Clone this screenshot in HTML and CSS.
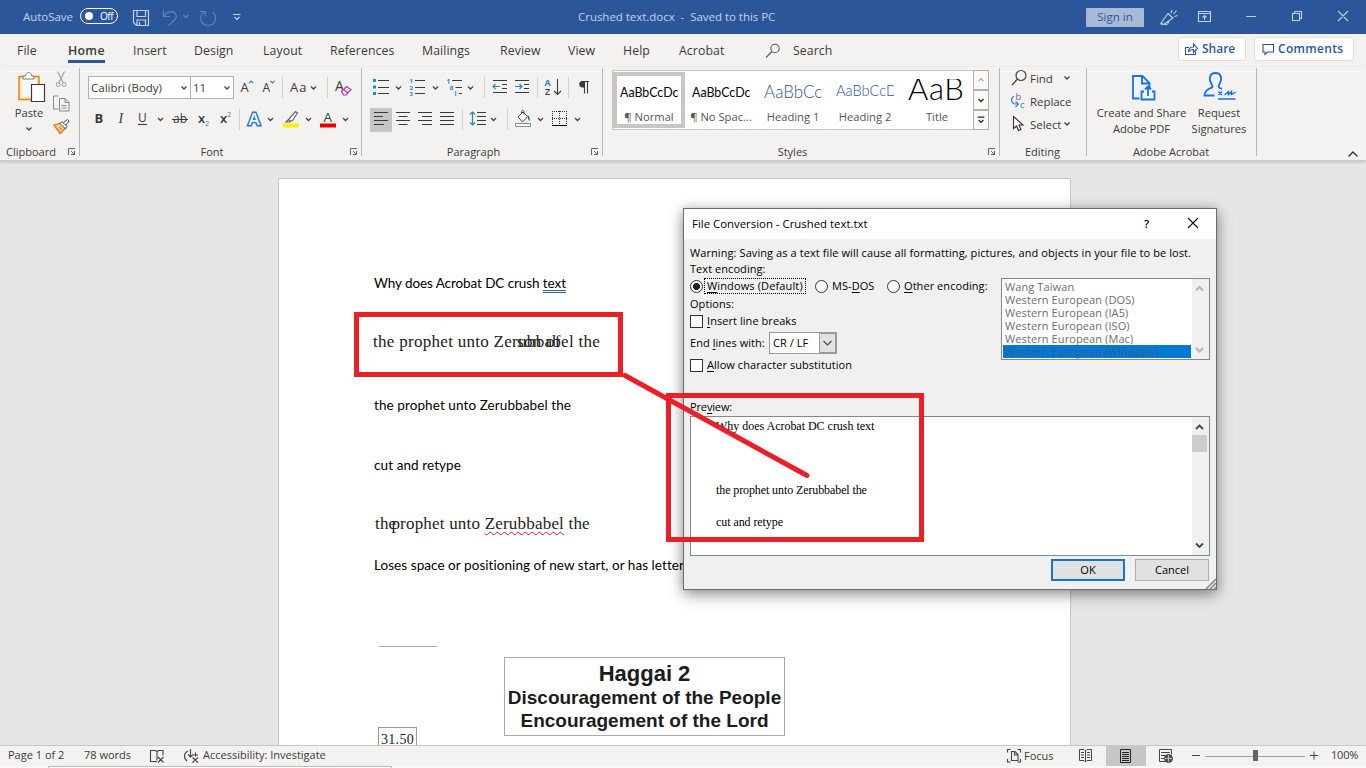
FILE: index.html
```html
<!DOCTYPE html>
<html lang="en">
<head>
<meta charset="utf-8">
<title>Crushed text.docx - Word</title>
<link rel="stylesheet" href="styles.css">
</head>
<body>
<header class="titlebar">
  <div class="quick">
    <span class="autosave">AutoSave</span>
    <span class="toggle"><i class="knob"></i>Off</span>
    <svg width="132" height="34" viewBox="118 0 132 34" fill="none" stroke="#c3d2ea" stroke-width="1.2">
      <path d="M133.5 10.5h15v15h-12l-3-3zM137 10.5v6h8.500v-6M137 25v-5h8.500v5M139.500 25v-3"/>
      <g stroke="#5f82bd"><path d="M163.500 10v6.500h6.500M164 16c3.500-5.500 10-5.500 12-1.500 1.500 3.500-2 6-7.500 11"/><path d="M183.500 15l2.500 2.500 2.500-2.500M200 11.500h5.500v5M204.500 12c-5 3-6 12 3.500 13.500 8-.5 9.500-9 5-13"/></g>
      <path d="M233 14.500h7.500M234.500 17l2.500 2.500 2.500-2.500"/>
    </svg>
  </div>
  <div class="doc-title">Crushed text.docx &nbsp;-&nbsp; Saved to this PC</div>
  <div class="window-tools">
    <button class="signin">Sign in</button>
    <svg width="222" height="34" viewBox="1144 0 222 34" fill="none" stroke="#c3d2ea" stroke-width="1.100">
      <path d="M1168 13.500l5 4.500-9.500 6.500-2.500-1.500zM1164 24c2 1.500 4.500.5 5-3M1160.500 23l1.500 2M1171 13l1-3M1173.500 14l3-3.500M1174.500 16.500l3-1"/>
      <path d="M1198.500 11.500h12v10h-12zM1198.500 13.500h12M1204.500 20v-4.500M1202.500 17.500l2-2 2 2"/>
      <path d="M1246 16.500h10M1292.500 13.500h7v7h-7zM1294.500 13.500v-2h7v7h-2M1338 11l10 10M1348 11l-10 10"/>
    </svg>
  </div>
</header>

<nav class="tabs">
  <div class="tab-list">
    <a>File</a><a class="active">Home</a><a>Insert</a><a>Design</a><a>Layout</a><a>References</a><a>Mailings</a><a>Review</a><a>View</a><a>Help</a><a>Acrobat</a>
    <a class="search"><svg width="16" height="16" viewBox="764 42 16 16" fill="none" stroke="#555" stroke-width="1.100"><circle cx="774" cy="47.500" r="4.200"/><path d="M771 50.500l-6 6"/></svg>Search</a>
  </div>
  <button class="pill share"><svg width="14" height="14" viewBox="1185 42 14 14" fill="none" stroke="#2b579a" stroke-width="1.100"><path d="M1189 47.500h-3.500v7h10v-3M1188.500 52c0-3 2-5 5-5v-3l4 4.500-4 4v-3c-2 0-4 .5-5 2.500z"/></svg>Share</button>
  <button class="pill comments"><svg width="14" height="14" viewBox="1262 42 14 14" fill="none" stroke="#2b579a" stroke-width="1.100"><path d="M1263 44.500h10.500v7.500h-6l-2.500 2.500v-2.500h-2z"/></svg>Comments</button>
</nav>

<section class="ribbon">
  <div class="group clipboard">
    <div class="body">
      <div class="paste">
        <svg width="36" height="38" viewBox="11 68 36 38" fill="none"><path d="M19 76.500h20v23H19z" fill="#fbe0a8" stroke="#e08a1e" stroke-width="1.500"/><path d="M21.500 79h15v18h-15z" fill="#fafafa"/><path d="M23 79v-3h2.500c0-4.500 6-4.500 6 0H34v3z" fill="#fff" stroke="#777"/><path d="M31.500 84.500h13v17h-13z" fill="#fff" stroke="#3b3a39" stroke-width="1.200"/></svg>
        <span>Paste</span>
        <svg width="8" height="6" viewBox="0 0 8 6" class="chev"><path d="M1.500 1.500L4 4l2.500-2.500"/></svg>
      </div>
      <svg width="24" height="72" viewBox="50 68 24 72" fill="none" stroke="#a19f9d"><path d="M57.500 71.500l5.500 11M64.500 71.500l-5.500 11" stroke-width="1.200"/><circle cx="58.200" cy="84.500" r="2"/><circle cx="64" cy="84.500" r="2"/><path d="M58.500 96h-5v13h5M59.500 98.500h5.500l4 4v8.500h-9.500zM65 98.500v4h4M61.500 105.500h5M61.500 108h5" stroke="#8a8886"/><path d="M54 125l7-2 5 5-6 5.500z" fill="#f9c98a" stroke="#e07a10" stroke-width="1.300"/><path d="M57 128.500l2 2M59.500 127l2 3" stroke="#e07a10"/><path d="M60 123.500l2-2 5 5-2 2zM63.500 122.500l4-3 1.500 1.500-3 4" fill="#fff" stroke="#444"/></svg>
    </div>
    <div class="label"><span>Clipboard</span><svg class="launch" width="16" height="12" viewBox="0 0 16 12"><path d="M5.500 9V2.500H12M8 5l3.500 3.500M11.500 5v3.500H8"/></svg></div>
  </div>

  <div class="group font">
    <div class="body stack">
      <div class="row">
        <span class="combo family">Calibri (Body)<svg width="8" height="6" viewBox="0 0 8 6" class="chev"><path d="M1.500 1.500L4 4l2.500-2.500"/></svg></span>
        <span class="combo size">11<svg width="8" height="6" viewBox="0 0 8 6" class="chev"><path d="M1.500 1.500L4 4l2.500-2.500"/></svg></span>
        <svg class="glyphs" width="50" height="24" viewBox="234 76 50 24"><text x="240.500" y="92" font-size="13">A</text><text x="262.500" y="92" font-size="12">A</text><path class="b" d="M249 83l2-2 2 2M270.500 81l2 2 2-2"/><path class="sep" d="M282.500 77v21"/></svg>
        <svg class="glyphs" width="46" height="24" viewBox="284 76 46 24"><text x="290" y="92" font-size="13" letter-spacing="1">Aa</text><path class="c" d="M311 86.500l2.500 2.500 2.500-2.500"/><path class="sep" d="M327.500 77v21"/></svg>
        <svg class="glyphs" width="26" height="24" viewBox="330 76 26 24"><text x="335" y="91" font-size="14">A</text><path d="M341.500 91.500l5-5 4.500 3-5 5.500h-2.500zM343.500 89.500l4.500 3.500" fill="#f5e6fa" stroke="#a33eb5" stroke-width="1.200"/></svg>
      </div>
      <div class="row">
        <svg class="glyphs" width="78" height="24" viewBox="88 108 78 24"><text x="94.500" y="123" font-size="13" font-weight="700">B</text><text x="118.500" y="123" class="serif" font-size="14" font-style="italic">I</text><text x="138" y="122" font-size="12">U</text><path class="k" d="M138 124.500h9"/><path class="c" d="M158 118l2.500 2.500 2.500-2.500"/></svg>
        <svg class="glyphs" width="76" height="24" viewBox="166 108 76 24"><text x="173" y="123" font-size="12">ab</text><path class="k" d="M172 119.500h16"/><text x="198" y="123" font-size="13" font-weight="600">x</text><text x="205" y="126" font-size="7.500" class="blue">2</text><text x="220" y="123" font-size="13" font-weight="600">x</text><text x="227" y="117" font-size="7.500" class="blue">2</text><path class="sep" d="M239.500 109v21"/></svg>
        <svg class="glyphs" width="36" height="24" viewBox="242 108 36 24"><text class="outlined" x="248.500" y="125" font-size="17" font-weight="600">A</text><path class="c" d="M268 118l2.500 2.500 2.500-2.500"/></svg>
        <svg class="glyphs" width="37" height="24" viewBox="278 108 37 24"><path d="M283 123.500h16v4h-16z" fill="#ffef00"/><path d="M289 119l6.500-7.500 2 1.500-5 7.500-3 .5zM289 119l-3 3h4l1.500-1.500" fill="#fff" stroke="#666" stroke-width="1.200"/><path class="c" d="M306 118l2.500 2.500 2.500-2.500"/></svg>
        <svg class="glyphs" width="38" height="24" viewBox="315 108 38 24"><path d="M320 123.500h16v4h-16z" fill="#e60000"/><text x="323.500" y="122" font-size="13.500">A</text><path class="c" d="M343 118l2.500 2.500 2.500-2.500"/></svg>
      </div>
    </div>
    <div class="label"><span>Font</span><svg class="launch" width="16" height="12" viewBox="0 0 16 12"><path d="M5.500 9V2.500H12M8 5l3.500 3.500M11.500 5v3.500H8"/></svg></div>
  </div>

  <div class="group paragraph">
    <div class="body stack">
      <div class="row">
        <svg class="glyphs" width="34" height="24" viewBox="370 76 34 24"><path d="M373 79h3v3h-3zM373 85.500h3v3h-3zM373 92h3v3h-3z" fill="#2488c9"/><path class="k" d="M378 80.500h11M378 87.500h11M378 93.500h11"/><path class="c" d="M396 86.500l2.500 2.500 2.500-2.500"/></svg>
        <svg class="glyphs" width="38" height="24" viewBox="404 76 38 24"><g class="blue" font-size="6" font-weight="700"><text x="409.500" y="83">1</text><text x="409.500" y="89.500">2</text><text x="409.500" y="96">3</text></g><path class="k" d="M415 80.500h10M415 87.500h10M415 93.500h10"/><path class="c" d="M433 86.500l2.500 2.500 2.500-2.500"/></svg>
        <svg class="glyphs" width="46" height="24" viewBox="442 76 46 24"><g class="blue" font-size="6.500" font-weight="700"><text x="446.500" y="83.500">1</text><text x="449.500" y="89.500">a</text><text x="454.500" y="95.500">i</text></g><path class="k" d="M452 80.500h10M455.500 87.500h6.500M459 93.500h3"/><path class="c" d="M468 86.500l2.500 2.500 2.500-2.500"/><path class="sep" d="M484.500 77v21"/></svg>
        <svg class="glyphs" width="53" height="24" viewBox="488 76 53 24"><path class="k" d="M493 80.500h14M502 84.500h5M502 88.500h5M493 92.500h14M515 80.500h14M524 84.500h5M524 88.500h5M515 92.500h14"/><path class="b" d="M500 86.500h-7M495.500 84l-2.500 2.500 2.500 2.500M515 86.500h7M519.500 84l2.500 2.500-2.500 2.500"/><path class="sep" d="M537.500 77v21"/></svg>
        <svg class="glyphs" width="31" height="24" viewBox="541 76 31 24"><text x="544.500" y="86" font-size="9" font-weight="700" class="blue">A</text><text x="545" y="95" font-size="9" font-weight="600">Z</text><path class="k" d="M557.500 79v15M554 91l3.500 3.500 3.500-3.500"/><path class="sep" d="M568.500 77v21"/></svg>
        <svg class="glyphs" width="24" height="24" viewBox="572 76 24 24"><path d="M584 81h-2a3.300 3.300 0 0 0 0 6.500h2z" fill="#3b3a39"/><path class="k" d="M581 81.500h8M584.500 81v12.500M587.500 81v12.500"/></svg>
      </div>
      <div class="row">
        <svg class="glyphs on" width="22" height="24" viewBox="370 108 22 24"><path class="k" d="M374 112.500h14M374 116.500h9M374 120.500h14M374 124.500h10"/></svg>
        <svg class="glyphs" width="74" height="24" viewBox="392 108 74 24"><path class="k" d="M396 112.500h14M398.500 116.500h9M396 120.500h14M398.500 124.500h9M418 112.500h14M422 116.500h10M418 120.500h14M422 124.500h10M440 112.500h14M440 116.500h14M440 120.500h14M440 124.500h14"/><path class="sep" d="M462.500 109v21"/></svg>
        <svg class="glyphs" width="45" height="24" viewBox="466 108 45 24"><path class="k" d="M477 112.500h9M477 116.500h9M477 120.500h9M477 124.500h9"/><path class="b" d="M472.500 112v13M470 114.500l2.500-2.500 2.500 2.500M470 122.500l2.500 2.500 2.500-2.500"/><path class="c" d="M491 118l2.500 2.500 2.500-2.500"/><path class="sep" d="M507.500 109v21"/></svg>
        <svg class="glyphs" width="37" height="24" viewBox="511 108 37 24"><path d="M518 117l5-5 4.500 4.500-5 5.500zM521.500 114v-2.500c.5-1.500 2-1.500 2.500 0v3" fill="#fff" stroke="#444"/><path d="M527 115.500c3 0 3 3 2.500 6-1-1-1.500-3-2.500-6z" fill="#1f6fb5"/><path d="M515.500 123.500h15v3h-15z" fill="#fff" stroke="#888"/><path class="c" d="M538 118l2.500 2.500 2.500-2.500"/></svg>
        <svg class="glyphs" width="37" height="24" viewBox="548 108 37 24"><path d="M552.500 111v14M559.500 111v14M566.500 111v14M552 111.500h15M552 118.500h15" stroke="#333" stroke-dasharray="1 1" fill="none"/><path d="M552 125.500h15" stroke="#000"/><path class="c" d="M575 118l2.500 2.500 2.500-2.500"/></svg>
      </div>
    </div>
    <div class="label"><span>Paragraph</span><svg class="launch" width="16" height="12" viewBox="0 0 16 12"><path d="M5.500 9V2.500H12M8 5l3.500 3.500M11.500 5v3.500H8"/></svg></div>
  </div>

  <div class="group styles">
    <div class="body">
      <div class="gallery">
        <div class="style selected"><div class="preview">AaBbCcDc</div><div class="name">¶ Normal</div></div>
        <div class="style"><div class="preview">AaBbCcDc</div><div class="name">¶ No Spac...</div></div>
        <div class="style"><div class="preview h1">AaBbCc</div><div class="name">Heading 1</div></div>
        <div class="style"><div class="preview h2">AaBbCcD</div><div class="name">Heading 2</div></div>
        <div class="style"><div class="preview big">AaB</div><div class="name">Title</div></div>
        <div class="spin">
          <svg width="14" height="19" viewBox="0 0 14 19" class="chev dim"><path d="M4.500 10.500L7 8l2.500 2.500"/></svg>
          <svg width="14" height="18" viewBox="0 0 14 18" class="chev dark"><path d="M4.500 8L7 10.500 9.500 8"/></svg>
          <svg width="14" height="19" viewBox="0 0 14 19" class="chev dark"><path d="M3.500 6.500h7M4.500 9.500L7 12l2.500-2.500"/></svg>
        </div>
      </div>
    </div>
    <div class="label"><span>Styles</span><svg class="launch" width="16" height="12" viewBox="0 0 16 12"><path d="M5.500 9V2.500H12M8 5l3.500 3.500M11.500 5v3.500H8"/></svg></div>
  </div>

  <div class="group editing">
    <div class="body">
      <div class="cmd"><svg width="20" height="20" viewBox="1010 68 20 20" fill="none" stroke="#444" stroke-width="1.200"><circle cx="1021" cy="75.500" r="5"/><path d="M1017.500 79l-5.500 6"/></svg>Find<svg width="8" height="6" viewBox="0 0 8 6" class="chev far"><path d="M1.500 1.500L4 4l2.500-2.500"/></svg></div>
      <div class="cmd"><svg class="glyphs" width="20" height="20" viewBox="1010 92 20 20"><text x="1015.500" y="101" font-size="9.500" fill="#a33eb5">b</text><text x="1020" y="109" font-size="9.500" fill="#2488c9">c</text><path class="b" d="M1014 97c-3 2-3.500 6 .5 8h3.500M1015.500 102.500l3 2.500-3 3"/></svg>Replace</div>
      <div class="cmd"><svg width="20" height="20" viewBox="1010 115 20 20" fill="#fff" stroke="#333" stroke-width="1.100"><path d="M1013.500 117.500v12l3-2.500 2 4.500 2.500-1-2-4.500h4z"/></svg>Select<svg width="8" height="6" viewBox="0 0 8 6" class="chev near"><path d="M1.500 1.500L4 4l2.500-2.500"/></svg></div>
    </div>
    <div class="label"><span>Editing</span></div>
  </div>

  <div class="group acrobat">
    <div class="body">
      <div class="big-cmd create"><svg width="34" height="36" viewBox="1124.500 69 34 36" fill="none" stroke="#1473e6" stroke-width="1.800"><path d="M1139 98.500h-6.500V76h9.500l7 7v5M1141.500 76v7.500h7.500"/><path d="M1143.500 91.500h-2.500v8h13v-8h-2.500M1147.500 96v-9M1144.500 89.500l3-3 3 3"/></svg><span>Create and Share<br>Adobe PDF</span></div>
      <div class="big-cmd request"><svg width="38" height="36" viewBox="1199.500 69 38 36" fill="none" stroke="#1473e6" stroke-width="1.800"><path d="M1214 95.500h-10c0-5 4-6.500 7.500-8 1-1 .5-2-.5-3.500-3-5-2-11 4-11s7 6 4 11c-1 1.500-1.500 2.500-.5 3.500l3 1.500"/><path d="M1217.500 99h17.500M1218 91.500l3.500 3.500M1221.500 91.500l-3.500 3.500M1224 95l4-3.500v3l3-3v3l4-2.500" stroke-width="1.400"/></svg><span>Request<br>Signatures</span></div>
    </div>
    <div class="label"><span>Adobe Acrobat</span></div>
  </div>
  <svg class="collapse" width="16" height="12" viewBox="0 0 16 12"><path d="M3.500 8.500L8 4l4.500 4.500" fill="none" stroke="#333" stroke-width="1.300"/></svg>
</section>

<main class="workspace">
  <article class="page">
    <p class="sans l1">Why does Acrobat DC crush <span class="grammar">text</span></p>
    <p class="scan l2">the prophet unto Zerubbabel the<span class="overlap">son of</span></p>
    <p class="sans l3">the prophet unto Zerubbabel the</p>
    <p class="sans l4">cut and retype</p>
    <p class="scan l5"><span>the</span><span class="crush">prophet unto <span class="spelling">Zerubbabel</span> the</span></p>
    <p class="sans l6">Loses space or positioning of new start, or has letter</p>
    <div class="rule"></div>
    <div class="heading-box"><div class="h-big">Haggai 2</div><div>Discouragement of the People</div><div>Encouragement of the Lord</div></div>
    <div class="number-box">31.50</div>
  </article>
</main>

<footer class="status">
  <span class="s-page">Page 1 of 2</span>
  <span class="s-words">78 words</span>
  <svg width="60" height="20" viewBox="143 746 60 20" fill="none" stroke="#444" stroke-width="1.100"><path d="M157 751.500l-1.500-1h-5v11h5l1.500.5M157 751.500l1.500-1h4.500v5M157 751.500v9M158 757l5.500 5.500M163.500 757l-5.500 5.500"/><path d="M188 751c-4 2-5 7-1 10M190.500 749v8M188 754.500l2.500 2.500 2.500-2.500M193 755h5M195.500 752.500v4M192.500 757.500l5.500 5M198 757.500l-5.500 5" /></svg>
  <span class="s-acc">Accessibility: Investigate</span>
  <svg class="s-focus-icon" width="20" height="20" viewBox="1004 746 20 20" fill="none" stroke="#444" stroke-width="1.100"><path d="M1010.500 749.500h-3v3M1007.500 759v3h3M1017.500 749.500h3v3M1020.500 759v3h-3M1011.500 751.500h3.500l3 3v6h-6.500zM1014.500 751.500v3.500h3.500"/></svg>
  <span class="s-focus">Focus</span>
  <svg width="46" height="20" viewBox="1060 746 46 20" fill="none" stroke="#444"><path d="M1085.500 751l-1.500-1.500h-4.500v11h4.500l1.500 1.500 1.500-1.500h4.500v-11h-4.500zM1085.500 751v10.500M1081 752.500h3M1081 755h3M1081 757.500h3M1087 752.500h3M1087 755h3M1087 757.500h3"/></svg>
  <svg class="on" width="40" height="21" viewBox="1106 745 40 21" fill="none" stroke="#222"><path d="M1120.500 749.500h10v13h-10zM1122 752.500h7M1122 754.500h7M1122 756.500h7M1122 758.500h7M1122 760.500h7"/></svg>
  <svg width="40" height="20" viewBox="1146 746 40 20" fill="none" stroke="#444"><path d="M1166 761.500h-6.500v-12h12v5M1161 752.500h9M1161 755.500h5M1161 758.500h3"/><circle cx="1168.500" cy="758.500" r="4" fill="#555"/><path d="M1165 758.500h7M1168.500 755v7" stroke="#ddd" stroke-width=".7"/></svg>
  <svg width="136" height="20" viewBox="1186 746 136 20"><path d="M1192 755.500h8M1310 755.500h8M1314 751.500v8" stroke="#444"/><path d="M1205 756.500h100" stroke="#a0a0a0"/><path d="M1253 750h5v11h-5z" fill="#666"/></svg>
  <span class="s-zoom">100%</span>
</footer>
<div class="under"><div class="under-box"></div></div>

<section class="dialog">
  <div class="d-title"><span>File Conversion - Crushed text.txt</span><span class="help">?</span><svg width="46" height="30" viewBox="1170 209 46 30"><path d="M1188 218l10 10M1198 218l-10 10" stroke="#111" stroke-width="1.100"/></svg></div>
  <div class="d-body">
    <div class="line warn">Warning: Saving as a text file will cause all formatting, pictures, and objects in your file to be lost.</div>
    <div class="options">
      <div class="opt-left">
        <div class="line">Text encoding:</div>
        <div class="line radios">
          <label><i class="radio checked"></i><span class="focus"><u>W</u>indows (Default)</span></label>
          <label><i class="radio"></i><span>MS-<u>D</u>OS</span></label>
          <label><i class="radio"></i><span><u>O</u>ther encoding:</span></label>
        </div>
        <div class="line">Options:</div>
        <div class="line check"><i class="box"></i><span><u>I</u>nsert line breaks</span></div>
        <div class="line ends"><span>End <u>l</u>ines with:</span><span class="select">CR / LF<svg width="17" height="20" viewBox="0 0 17 20"><path d="M0 0h17v20H0z" fill="#e1e1e1" stroke="#999" stroke-width="2"/><path d="M4.500 8l4 4 4-4" fill="none" stroke="#444" stroke-width="1.100"/></svg></span></div>
        <div class="line check allow"><i class="box"></i><span><u>A</u>llow character substitution</span></div>
      </div>
      <div class="list">
        <div class="items"><div>Wang Taiwan</div><div>Western European (DOS)</div><div>Western European (IA5)</div><div>Western European (ISO)</div><div>Western European (Mac)</div><div class="sel">Western European (Windows)</div></div>
        <svg width="17" height="80" viewBox="1192 279 17 80" fill="none" stroke="#b5b5b5" stroke-width="2"><path d="M1196 290.500l3.500-3.500 3.500 3.500M1196 348l3.500 3.500 3.500-3.500"/></svg>
      </div>
    </div>
    <div class="line preview-label">Pre<u>v</u>iew:</div>
    <div class="preview-box">
      <div class="text"><p class="p1">Why does Acrobat DC crush text</p><p class="p2">the prophet unto Zerubbabel the</p><p class="p3">cut and retype</p></div>
      <svg width="17" height="138" viewBox="1192 417 17 138"><path d="M1192 417h17v138h-17z" fill="#f0f0f0"/><path d="M1192 435h15v17h-15z" fill="#cdcdcd"/><path d="M1196 429l3.500-3.500 3.500 3.500M1196 543.500l3.500 3.500 3.500-3.500" fill="none" stroke="#444" stroke-width="1.800"/></svg>
    </div>
    <div class="buttons"><button class="ok">OK</button><button>Cancel</button></div>
  </div>
  <svg class="grip" width="11" height="11" viewBox="0 0 11 11"><path d="M1 11L11 1M5 11l6-6M9 11l2-2" stroke="#8a8a8a" stroke-width="1.600"/></svg>
</section>

<svg class="markup" width="1366" height="768" viewBox="0 0 1366 768" fill="none" stroke="#ea1f27" stroke-width="5"><path d="M356.500 314.500h264v60h-264zM668.500 395.500h253v144h-253z"/><path d="M625 375.500L807 475.500" stroke-linecap="round" stroke-width="5"/></svg>
</body>
</html>
```
FILE: styles.css
```css
*{box-sizing:border-box}
body{margin:0;width:1366px;height:768px;overflow:hidden;position:relative;background:#e6e6e6;font-family:"Open Sans","Noto Sans",sans-serif;font-size:11.5px;color:#3b3a39;white-space:nowrap;display:flex;flex-direction:column}
svg{display:block;flex:none}
p{margin:0}
button{font:inherit;margin:0;padding:0}
.titlebar{height:34px;flex:none;background:#2b579a;display:flex;align-items:center;color:#c3d2ea;line-height:33px}
.quick{width:578px;padding-left:23px;display:flex;align-items:center}
.autosave{width:57px;font-size:11.5px;letter-spacing:-.05px;margin-top:-2px}
.toggle{width:38px;height:16px;border:1px solid #fff;border-radius:8px;display:flex;align-items:center;color:#fff;font-size:10px;letter-spacing:-.5px;line-height:14px;margin-top:-2px}
.knob{width:8px;height:8px;border-radius:50%;background:#fff;margin:0 7px 0 4px}
.doc-title{font-size:11.5px;height:33px;line-height:31px;letter-spacing:-.03px}
.window-tools{margin-left:auto;display:flex;align-items:center}
.signin{width:58px;height:19px;background:#a8bad8;border:0;color:#2b579a;line-height:18px;border-radius:1px}
.tabs{height:33px;flex:none;background:#f3f2f1;display:flex;align-items:center;padding-left:17px;font-size:12.3px}
.tab-list{display:grid;grid-template-columns:51px 65px 61px 69px 67px 92px 78px 68px 55px 56px 86px 413px;line-height:24px;height:24px}
.tab-list a{height:24px;justify-self:start;letter-spacing:.08px}
.tab-list .active{font-weight:600;border-bottom:3px solid #2b579a;letter-spacing:.3px}
.tab-list .search{display:flex;gap:12px;align-items:center;height:24px}
.pill{height:24px;background:#fff;border:1px solid #e1dfdd;border-radius:3px;color:#2b579a;font-weight:600;font-size:12px;display:flex;align-items:center;line-height:22px;margin-top:-3px}
.share{width:68px;padding-left:6px;gap:3px}
.comments{width:100px;padding-left:7px;gap:2px;margin-left:8px;letter-spacing:.3px}
.ribbon{height:94px;flex:none;background:#f3f2f1;display:flex;padding-top:1px;border-bottom:1px solid #cfcdcb;position:relative;z-index:1;box-shadow:0 1px 3px rgba(0,0,0,.18)}
.group{height:88px;border-right:1px solid #b9b7b5;display:flex;flex-direction:column}
.body{height:76px;flex:none;display:flex}
.label{height:12px;line-height:16px;font-size:11px;display:flex}
.label span{flex:1;text-align:center;margin-left:-1px}
.launch{fill:none;stroke:#666;margin-top:2px}
.chev{fill:none;stroke:#444;stroke-width:1.300}
.clipboard{width:80px}
.font{width:282px}
.paragraph{width:241px}
.styles{width:397px}
.editing{width:87px}
.acrobat{width:170px}
.paste{width:50px;padding-left:8px;display:flex;flex-direction:column;align-items:center;font-size:11.2px;line-height:14px}
.paste .chev{margin-top:6px}
.stack{flex-direction:column;padding:8px 0 0 8px;gap:8px}
.row{height:24px;display:flex}
.combo{height:23px;border:1px solid #b3b0ad;background:#fff;display:flex;align-items:center;justify-content:space-between;padding:0 2px;line-height:20px}
.family{width:103px}
.size{width:44px;margin-left:-1px}
.glyphs{font-family:"Open Sans",sans-serif;fill:#3b3a39}
.glyphs .serif{font-family:"Liberation Serif",serif}
.glyphs .blue{fill:#2488c9}
.glyphs .outlined{fill:#f4faff;stroke:#1f78c1;stroke-width:3px;paint-order:stroke}
.glyphs .k{stroke:#3b3a39;fill:none;stroke-width:1.100}
.glyphs .c{stroke:#444;fill:none;stroke-width:1.300}
.glyphs .b{stroke:#2488c9;fill:none;stroke-width:1.200}
.glyphs .sep{stroke:#d2d0ce;fill:none}
.on{background:#c6c6c6}
.styles .body{padding:2px 0 0 9px}
.gallery{width:377px;height:60px;border:1px solid #c8c6c4;background:#fff;display:flex}
.style{width:72px;height:56px;margin-top:1px;padding:7px 7px 0}
.selected{outline:4px solid #c6c6c6;outline-offset:-4px}
.preview{width:58px;height:26px;overflow:hidden;font:12.4px/28px Lato,sans-serif;color:#000}
.preview.h1{font-size:17px;font-weight:300;color:#2f5496;line-height:25px}
.preview.h2{font-size:14.6px;font-weight:300;color:#2f5496;line-height:24px}
.preview.big{font-size:31px;font-weight:300;line-height:18px;letter-spacing:.6px}
.name{text-align:center;font-size:11.200px;line-height:24px;margin:0 -7px;height:22px;color:#555}
.spin{width:15px;margin-left:auto;height:60px;margin-top:-1px;margin-right:-1px}
.spin svg{width:16px;height:20px;border:1px solid #b3b0ad;margin-left:-1px;background:#f8f8f8}
.chev.dim{stroke:#aaa}.chev.dark{stroke:#222}
.editing .body{flex-direction:column;gap:3px;padding-left:10px}
.cmd{height:20px;display:flex;align-items:center;font-size:11.400px}
.far{margin-left:10px}.near{margin-left:2px}
.big-cmd{text-align:center;line-height:16px;font-size:11.200px;letter-spacing:-.03px;display:flex;flex-direction:column;align-items:center;padding-top:1px}
.acrobat .body{padding-left:9px;gap:3px}
.create{width:91px}.request{width:58px}
.collapse{margin:80px 0 0 88px}
.workspace{flex:1;overflow:hidden;padding:17px 0 0 278px}
.page{width:793px;height:640px;background:#fff;border:1px solid #c6c6c6;padding-left:95px;color:#000}
.sans{font:13.500px/20px Lato,sans-serif;height:20px;letter-spacing:.09px}
.scan{font:17px/20px "Liberation Serif",serif;height:20px;letter-spacing:.29px;color:#222}
.page .l1{margin-top:94px;letter-spacing:-.09px}
.grammar{text-decoration:underline double #2b5fb8 1px;text-underline-offset:2px}
.l2{margin-top:39px;margin-left:-1px;position:relative}
.overlap{position:absolute;left:144px;top:0}
.l3{margin-top:43px}.l4{margin-top:40px}
.l5{margin-top:39px;padding-left:1px;letter-spacing:.2px}
.crush{margin-left:-5px}
.spelling{text-decoration:underline wavy #d02020 1px;text-underline-offset:2px}
.l6{margin-top:21px;letter-spacing:.06px}
.rule{width:58px;height:1px;background:#aaa;margin:71px 0 0 5px}
.heading-box{width:281px;height:79px;border:1px solid #aaa;margin:10px 0 0 130px;font:bold 19px/23px "Liberation Sans",sans-serif;text-align:center;color:#1c1c1c;padding-top:4px}
.h-big{font-size:22px;line-height:24px}
.number-box{width:39px;height:30px;border:1px solid #999;margin:-9px 0 0 4px;font:14px/23px "Liberation Serif",serif;letter-spacing:.3px;text-align:center;color:#222}
.status{height:21px;flex:none;background:#f3f2f1;border-top:1px solid #c8c6c4;display:flex;align-items:center;font-size:11px;line-height:18px;padding-left:8px;position:relative;z-index:1}
.status span{margin-top:-2px}
.status .s-focus{margin-top:-1px}
.s-page{width:76px}.s-words{width:59px}
.status .on{margin-top:-1px}
.s-focus-icon{margin-left:auto}
.s-focus{width:36px}
.s-zoom{width:44px;padding-left:9px;letter-spacing:-.2px}
.under{height:2px;flex:none;background:#f8f8f8;padding-left:48px}
.under-box{width:344px;height:2px;border:1px solid #bbb;border-bottom:0;background:#fff}
.dialog{position:absolute;left:683px;top:208px;width:534px;height:382px;border:1px solid #6b6b6b;background:#f0f0f0;color:#000;font-size:11px;box-shadow:0 5px 14px rgba(0,0,0,.38),0 0 10px rgba(0,0,0,.15)}
.d-title{height:30px;background:#fff;display:flex;align-items:center;padding-left:8px;font-size:11.400px}
.d-title span{margin-top:-2px}
.d-title .help{margin-left:auto;width:26px;font-weight:600}
.d-body{padding:6px 6px 0}
.line{height:16px;line-height:16px;letter-spacing:.06px}
.warn{letter-spacing:.085px}
.options{display:flex;height:138px}
.opt-left{width:311px}
.radios{height:18px;margin-bottom:1px;display:grid;grid-template-columns:125px 72px 110px;align-items:center}
.radios label{display:flex;align-items:center;gap:4px}
.radios label:first-child{gap:2px}
.radio{width:13px;height:13px;border:1px solid #333;border-radius:50%;background:#fff}
.checked{background:radial-gradient(circle,#222 0 3.200px,#fff 3.800px)}
.focus{outline:1px dotted #000;outline-offset:0;padding:0 2px;line-height:14px;letter-spacing:.13px;width:100px}
u{text-underline-offset:2px}
.check{height:18px;display:flex;align-items:center;gap:4px}
.box{width:13px;height:13px;border:1px solid #333;background:#fff}
.ends{height:22px;margin:2px 0;display:flex;align-items:center}
.ends>span:first-child{width:79px}
.select{width:68px;height:22px;border:1px solid #999;background:#fff;padding-left:3px;display:flex;justify-content:space-between;align-items:center}
.list{width:209px;height:82px;margin-top:17px;border:1px solid #828790;background:#fff;display:flex;justify-content:space-between;color:#6d6d6d;letter-spacing:.1px}
.list svg{background:#f0f0f0}
.items{width:189px;padding:1px 0 0 1px;line-height:13px}
.items div{height:13px;padding-left:2px}
.items .sel{background:#0078d7;color:#33608a}
.preview-label{letter-spacing:-.14px}
.preview-box{width:520px;height:140px;margin-top:1px;border:1px solid #828790;background:#fff;display:flex;justify-content:space-between;font:12px/16px "Liberation Serif",serif}
.text{padding:1px 0 0 25px}
.p1{letter-spacing:-.02px}.p2{margin-top:48px;letter-spacing:-.1px}.p3{margin-top:16px;letter-spacing:-.07px}
.buttons{display:flex;justify-content:flex-end;gap:10px;margin:3px 1px 0 0}
.buttons button{width:74px;height:22px;border:1px solid #adadad;background:#e1e1e1;line-height:18px;color:#000}
.buttons .ok{border:2px solid #0f78c8}
.grip{position:absolute;right:0;bottom:0}
.markup{position:absolute;left:0;top:0;z-index:5;pointer-events:none}
```
